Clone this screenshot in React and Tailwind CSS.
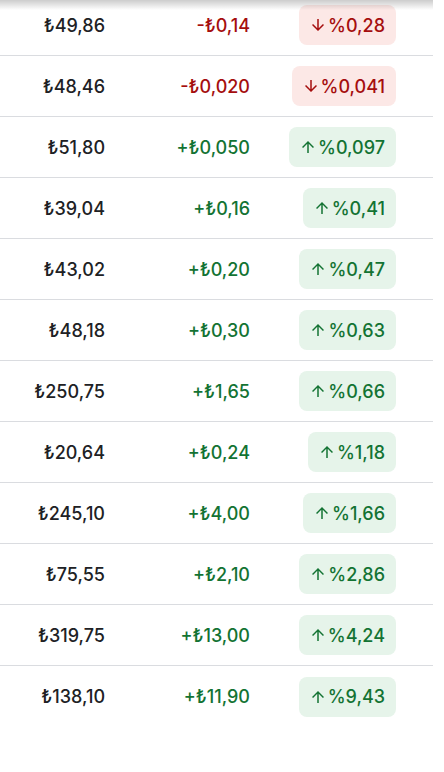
import React from 'react'

const rows = [
  { price: '₺49,86', change: '-₺0,14', pct: '%0,28', up: false },
  { price: '₺48,46', change: '-₺0,020', pct: '%0,041', up: false },
  { price: '₺51,80', change: '+₺0,050', pct: '%0,097', up: true },
  { price: '₺39,04', change: '+₺0,16', pct: '%0,41', up: true },
  { price: '₺43,02', change: '+₺0,20', pct: '%0,47', up: true },
  { price: '₺48,18', change: '+₺0,30', pct: '%0,63', up: true },
  { price: '₺250,75', change: '+₺1,65', pct: '%0,66', up: true },
  { price: '₺20,64', change: '+₺0,24', pct: '%1,18', up: true },
  { price: '₺245,10', change: '+₺4,00', pct: '%1,66', up: true },
  { price: '₺75,55', change: '+₺2,10', pct: '%2,86', up: true },
  { price: '₺319,75', change: '+₺13,00', pct: '%4,24', up: true },
  { price: '₺138,10', change: '+₺11,90', pct: '%9,43', up: true },
]

function Arrow({ up }) {
  return (
    <svg width="18" height="18" viewBox="0 0 24 24" fill="currentColor" className="shrink-0">
      {up
        ? <path d="M4 12l1.41 1.41L11 7.83V20h2V7.83l5.58 5.59L20 12l-8-8-8 8z" />
        : <path d="M20 12l-1.41-1.41L13 16.17V4h-2v12.17l-5.58-5.59L4 12l8 8 8-8z" />}
    </svg>
  )
}

function Row({ r, last }) {
  return (
    <div className={`grid grid-cols-[105px_145px_146px] items-center h-[61px] pr-[37px] ${last ? '' : 'border-b border-[#dadce0]'}`}>
      <div className="text-right text-[#202124]">{r.price}</div>
      <div className={`text-right ${r.up ? 'text-[#137333]' : 'text-[#a50e0e]'}`}>{r.change}</div>
      <div className="flex justify-end">
        <span className={`flex items-center gap-[1px] h-10 pl-[10px] pr-[11px] rounded-lg ${r.up ? 'bg-[#e6f4ea] text-[#137333]' : 'bg-[#fce8e6] text-[#a50e0e]'}`}>
          <Arrow up={r.up} />
          {r.pct}
        </span>
      </div>
    </div>
  )
}

export default function App() {
  return (
    <div className="relative w-[444px] h-[772px] overflow-hidden bg-white font-['Inter',sans-serif] text-[18px] font-medium">
      <div className="w-[433px] -mt-[5px]">
        {rows.map((r, i) => <Row key={i} r={r} last={i === rows.length - 1} />)}
      </div>
      <div className="absolute top-0 left-0 w-[433px] h-[10px] bg-gradient-to-b from-black/20 to-transparent" />
    </div>
  )
}
